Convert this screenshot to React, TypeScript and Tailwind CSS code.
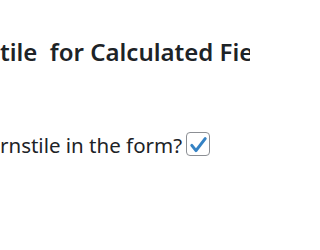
export default function App() {
  return (
    <div className="w-[250px] h-[250px] overflow-hidden bg-white text-[#1d2327] font-['Segoe_UI','Noto_Sans',sans-serif]">
      <div className="pt-[36px] whitespace-nowrap">
        <h2 className="text-[24px] leading-[32px] font-semibold">
          tile&nbsp; for Calculated Fields
        </h2>
        <div className="mt-[65px] flex items-start gap-[4px] text-[20.5px] leading-[24px]">
          <label htmlFor="enable">rnstile in the form?</label>
          <span className="-mt-[1px] w-[24px] h-[24px] shrink-0 rounded-[4px] border border-[#8c8f94] bg-white">
            <svg viewBox="0 0 22 22" className="w-[22px] h-[22px]">
              <path d="M4.8 12.4L9 17.6L18.2 5.6" fill="none" stroke="#3582c4" strokeWidth="3" strokeLinecap="round" strokeLinejoin="round" />
            </svg>
          </span>
        </div>
      </div>
    </div>
  );
}
